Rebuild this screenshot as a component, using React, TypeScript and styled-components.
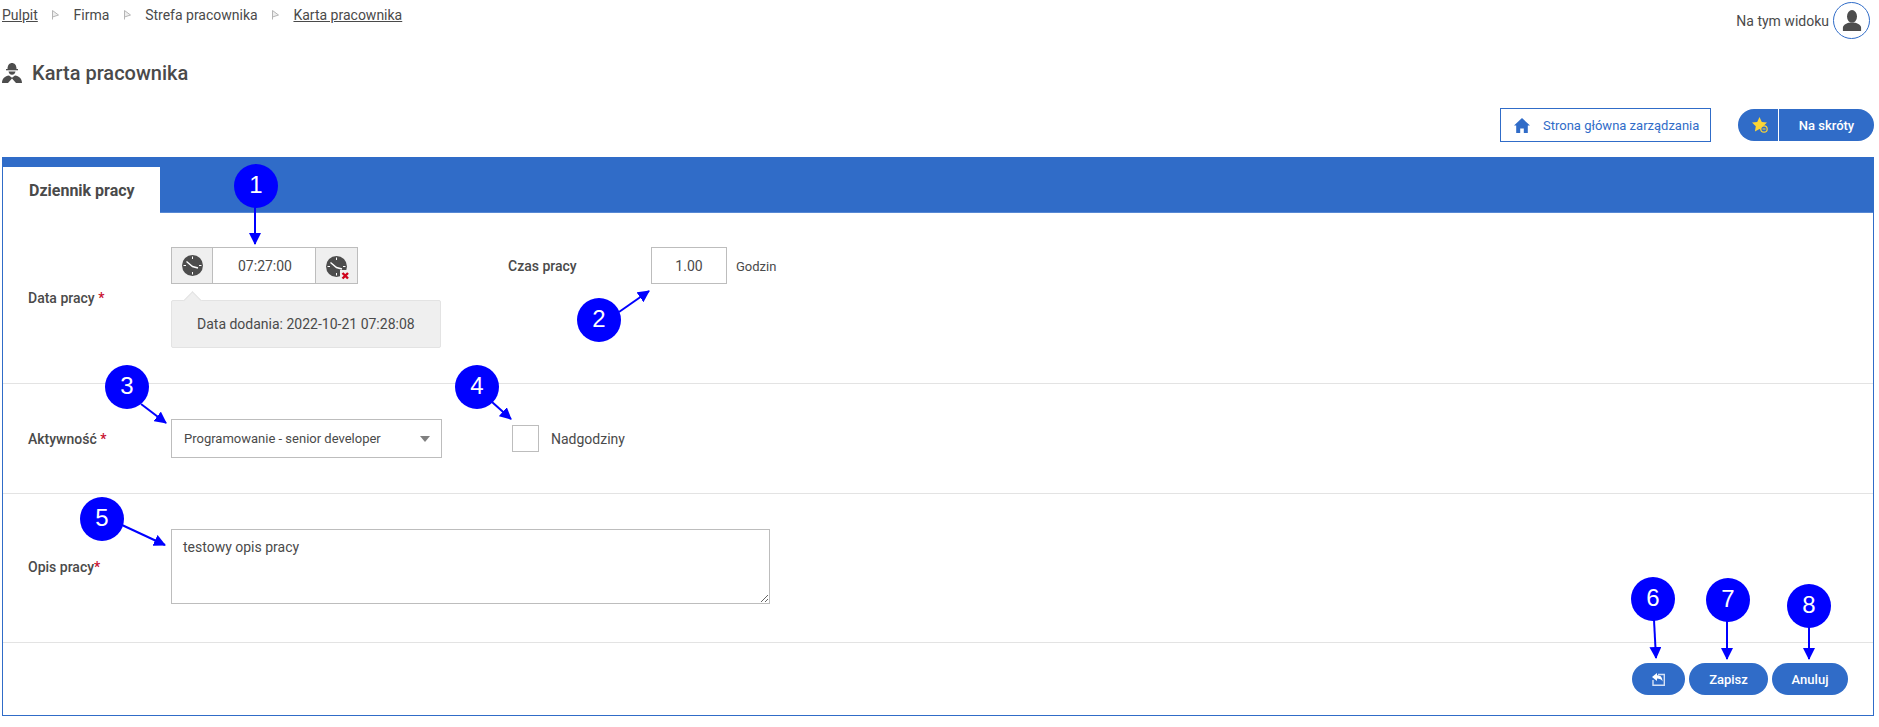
import React from "react";
import styled, { createGlobalStyle } from "styled-components";

const BLUE = "#306cc8";
const TEXT = "#4a4a4a";
const LINE = "#bdbdbd";

const GlobalStyle = createGlobalStyle`
  html, body {
    margin: 0;
    padding: 0;
    background: #fff;
  }
  body {
    font-family: Roboto, "Liberation Sans", sans-serif;
    font-size: 14px;
    color: ${TEXT};
  }
  * {
    box-sizing: border-box;
  }
`;

// Ikony
const ClockIcon: React.FC = () => (
  <svg width="21" height="21" viewBox="0 0 21 21">
    <circle cx="10.5" cy="10.5" r="10.5" fill="#4d4d4d" />
    <path d="M10.5 1.5v2.5M10.5 17v2.5M1.5 10.5H4M17 10.5h2.5" stroke="#fff" strokeWidth="1" />
    <path d="M4.5 6.5l6 5 5.5 1.5" stroke="#fff" strokeWidth="1.4" fill="none" />
  </svg>
);

const ClockRemoveIcon: React.FC = () => (
  <svg width="25" height="25" viewBox="0 0 25 25">
    <circle cx="10.5" cy="10.5" r="10.5" fill="#4d4d4d" />
    <path d="M10.5 1.5v2.5M10.5 17v2.5M1.5 10.5H4M17 10.5h2.5" stroke="#fff" strokeWidth="1" />
    <path d="M4.5 6.5l6 5 5.5 1.5" stroke="#fff" strokeWidth="1.4" fill="none" />
    <rect x="14" y="14" width="11" height="11" fill="#efefef" />
    <path d="M16.5 17l5.5 5.5M22 17l-5.5 5.5" stroke="#d0021b" strokeWidth="2.4" />
  </svg>
);

const SeparatorIcon: React.FC = () => (
  <svg width="7" height="10" viewBox="0 0 7 10">
    <path d="M.5.5v9M.5.5L6.5 5 .5 7" stroke="#b5b5b5" strokeWidth="1" fill="#eee" />
  </svg>
);

const WorkerIcon: React.FC = () => (
  <svg width="20" height="20" viewBox="0 0 20 20">
    <path d="M5.500 6C5.500 2 7.500 0 10 0s4.500 2 4.500 6z" fill="#4d4d4d" />
    <path d="M4 6h12v1.300H4z" fill="#4d4d4d" />
    <path d="M6.500 8.500h7c-.4 2-1.700 3.300-3.500 3.300S6.900 10.500 6.500 8.500z" fill="#4d4d4d" />
    <path d="M0 20c0-4.500 3-7 7-7.500l3 2.300 3-2.300c4 .5 7 3 7 7.500h-6l-4-4.500L6 20z" fill="#4d4d4d" />
  </svg>
);

const UserIcon: React.FC = () => (
  <svg width="20" height="21" viewBox="0 0 22 23">
    <ellipse cx="11" cy="7" rx="5.500" ry="7" fill="#4d4d4d" />
    <path d="M1 23v-3.500c0-3 3.500-4.500 6.500-5.500h7c3 1 6.500 2.500 6.500 5.500V23z" fill="#4d4d4d" />
  </svg>
);

const HomeIcon: React.FC = () => (
  <svg width="16" height="15" viewBox="0 0 16 15">
    <path d="M8 0L0 7.500h2.200V15h4v-4.500h3.600V15h4V7.500H16z" fill={BLUE} />
  </svg>
);

const StarIcon: React.FC = () => (
  <svg width="16" height="16" viewBox="0 0 16 16">
    <path d="M7.500 0l2.300 4.900 5.200.7-3.800 3.600.9 5.300-4.600-2.600-4.600 2.600.9-5.300L0 5.600l5.200-.7z" fill="#fcd535" />
    <circle cx="12" cy="12" r="3.200" fill={BLUE} stroke="#fcd535" strokeWidth="1.200" />
    <path d="M10.500 12h3" stroke="#fcd535" strokeWidth="1" />
  </svg>
);

const BackIcon: React.FC = () => (
  <svg width="13" height="13" viewBox="0 0 13 13">
    <path d="M6 1.500H12.300V12.300H1V7" stroke="#d5e1f5" strokeWidth="1.400" fill="none" />
    <path d="M0 4L5 0v2.300c3.500 0 5.500 2 5.500 6.200-1-2.200-2.700-3-5.500-3V8z" fill="#fff" />
  </svg>
);

// Adnotacje nałożone na zrzut
const markers = [
  { n: 1, x: 256, y: 186 },
  { n: 2, x: 599, y: 320 },
  { n: 3, x: 127, y: 387 },
  { n: 4, x: 477, y: 387 },
  { n: 5, x: 102, y: 519 },
  { n: 6, x: 1653, y: 599 },
  { n: 7, x: 1728, y: 600 },
  { n: 8, x: 1809, y: 606 },
];

const arrows = [
  [255, 206, 255, 244],
  [619, 312, 649, 291],
  [141, 404, 166, 423],
  [492, 402, 511, 419],
  [122, 525, 165, 545],
  [1654, 620, 1656, 658],
  [1727, 620, 1727, 659],
  [1809, 626, 1809, 659],
];

const Annotations: React.FC = () => (
  <>
    <ArrowLayer width="1879" height="727">
      <defs>
        <marker id="head" markerWidth="12" markerHeight="12" refX="11" refY="6" orient="auto" markerUnits="userSpaceOnUse">
          <path d="M0 0L12 6 0 12z" fill="#0000ff" />
        </marker>
      </defs>
      {arrows.map(([x1, y1, x2, y2]) => (
        <line key={`${x1}-${y1}`} x1={x1} y1={y1} x2={x2} y2={y2} stroke="#0000ff" strokeWidth="2" markerEnd="url(#head)" />
      ))}
    </ArrowLayer>
    {markers.map((m) => (
      <Marker key={m.n} $x={m.x} $y={m.y}>
        {m.n}
      </Marker>
    ))}
  </>
);

export default function App() {
  return (
    <Page>
      <GlobalStyle />
      <TopBar>
        <Breadcrumbs>
          <CrumbLink>Pulpit</CrumbLink>
          <SeparatorIcon />
          <span>Firma</span>
          <SeparatorIcon />
          <span>Strefa pracownika</span>
          <SeparatorIcon />
          <CrumbLink>Karta pracownika</CrumbLink>
        </Breadcrumbs>
        <ViewUser>
          Na tym widoku
          <Avatar>
            <UserIcon />
          </Avatar>
        </ViewUser>
      </TopBar>

      <Title>
        <WorkerIcon />
        <h1>Karta pracownika</h1>
      </Title>

      <Actions>
        <HomeLink>
          <HomeIcon />
          Strona główna zarządzania
        </HomeLink>
        <Shortcut>
          <ShortcutIcon>
            <StarIcon />
          </ShortcutIcon>
          <ShortcutText>Na skróty</ShortcutText>
        </Shortcut>
      </Actions>

      <Panel>
        <TabBar>
          <Tab>Dziennik pracy</Tab>
        </TabBar>

        <Row $top={34} $bottom={35}>
          <Label>
            Data pracy <Req>*</Req>
          </Label>
          <FieldColumn>
            <TimeGroup>
              <TimeButton>
                <ClockIcon />
              </TimeButton>
              <TimeValue>07:27:00</TimeValue>
              <TimeButton $remove>
                <ClockRemoveIcon />
              </TimeButton>
            </TimeGroup>
            <Hint>Data dodania: 2022-10-21 07:28:08</Hint>
          </FieldColumn>
          <TopField>
            <Label>Czas pracy</Label>
            <HoursInput defaultValue="1.00" />
            <Unit>Godzin</Unit>
          </TopField>
        </Row>

        <Row $top={35} $bottom={35}>
          <Label>
            Aktywność <Req>*</Req>
          </Label>
          <SelectBox>
            Programowanie - senior developer
            <Caret />
          </SelectBox>
          <CheckField>
            <Check type="checkbox" />
            <span>Nadgodziny</span>
          </CheckField>
        </Row>

        <Row $top={35} $bottom={38}>
          <Label>
            Opis pracy<Req>*</Req>
          </Label>
          <Description defaultValue="testowy opis pracy" />
        </Row>

        <Footer>
          <PillButton $width={53}>
            <BackIcon />
          </PillButton>
          <PillButton $width={79}>Zapisz</PillButton>
          <PillButton $width={76}>Anuluj</PillButton>
        </Footer>
      </Panel>

      <Annotations />
    </Page>
  );
}

const Page = styled.div`
  position: relative;
  width: 1879px;
  height: 727px;
  padding: 2px 5px 0 2px;
  overflow: hidden;
`;

const TopBar = styled.div`
  display: flex;
  justify-content: space-between;
  height: 37px;
`;

const Breadcrumbs = styled.nav`
  display: flex;
  align-items: center;
  gap: 14.4px;
  height: 26px;
`;

const CrumbLink = styled.a`
  text-decoration: underline;
`;

const ViewUser = styled.div`
  display: flex;
  align-items: center;
  gap: 4px;
  margin-right: 4px;
`;

const Avatar = styled.div`
  width: 37px;
  height: 37px;
  border: 1px solid ${BLUE};
  border-radius: 50%;
  display: flex;
  align-items: center;
  justify-content: center;
`;

const Title = styled.div`
  display: flex;
  align-items: center;
  gap: 10px;
  height: 26px;
  margin-top: 21px;

  h1 {
    margin: 0;
    font-size: 20px;
    font-weight: 500;
  }
`;

const Actions = styled.div`
  display: flex;
  justify-content: flex-end;
  align-items: center;
  gap: 27px;
  height: 34px;
  margin-top: 22px;
`;

const HomeLink = styled.a`
  display: flex;
  align-items: center;
  gap: 13px;
  width: 211px;
  height: 34px;
  padding-left: 13px;
  border: 1px solid ${BLUE};
  color: ${BLUE};
  font-size: 13px;
`;

const Shortcut = styled.button`
  display: flex;
  align-items: center;
  width: 136px;
  height: 32px;
  padding: 0;
  border: 0;
  border-radius: 16px;
  background: ${BLUE};
  color: #fff;
  font: 500 13px Roboto, sans-serif;
`;

const ShortcutIcon = styled.span`
  display: flex;
  align-items: center;
  justify-content: center;
  width: 41px;
  height: 100%;
  padding-left: 3px;
  border-right: 1px solid #fff;
`;

const ShortcutText = styled.span`
  flex: 1;
  text-align: center;
`;

const Panel = styled.div`
  margin-top: 15px;
  height: 559px;
  border: 1px solid ${BLUE};
  border-top: 0;
`;

const TabBar = styled.div`
  height: 56px;
  padding-top: 10px;
  background: ${BLUE};
  border-bottom: 1px solid #5688d4;
`;

const Tab = styled.div`
  display: flex;
  align-items: center;
  width: 157px;
  height: 46px;
  padding-left: 26px;
  background: #fff;
  font-size: 16px;
  font-weight: 700;
`;

const Row = styled.div<{ $top: number; $bottom: number }>`
  display: flex;
  align-items: center;
  padding: ${(p) => p.$top}px 0 ${(p) => p.$bottom}px 25px;
  border-bottom: 1px solid #e3e3e3;
`;

const Label = styled.label`
  flex: none;
  width: 143px;
  font-weight: 500;
`;

const Req = styled.span`
  color: #c8102e;
`;

const FieldColumn = styled.div`
  display: flex;
  flex-direction: column;
  gap: 16px;
  width: 271px;
`;

const TimeGroup = styled.div`
  display: flex;
  width: 187px;
  height: 37px;
  border: 1px solid ${LINE};
`;

const TimeButton = styled.div<{ $remove?: boolean }>`
  display: flex;
  align-items: center;
  justify-content: center;
  flex: none;
  width: ${(p) => (p.$remove ? 41 : 40)}px;
  background: #efefef;
  padding: ${(p) => (p.$remove ? "5px 0 0 4px" : "0")};
`;

const TimeValue = styled.div`
  flex: 1;
  display: flex;
  align-items: center;
  justify-content: center;
  padding-left: 2px;
  border-left: 1px solid ${LINE};
  border-right: 1px solid ${LINE};
`;

const Hint = styled.div`
  position: relative;
  display: flex;
  align-items: center;
  width: 270px;
  height: 48px;
  padding-left: 25px;
  background: #efefef;
  border: 1px solid #e3e3e3;
  border-radius: 2px;

  &::before {
    content: "";
    position: absolute;
    left: 14px;
    top: -7px;
    width: 12px;
    height: 12px;
    background: #efefef;
    border-left: 1px solid #e3e3e3;
    border-top: 1px solid #e3e3e3;
    transform: rotate(45deg);
  }
`;

const TopField = styled.div`
  align-self: flex-start;
  display: flex;
  align-items: center;
  margin-left: 66px;
`;

const HoursInput = styled.input`
  width: 76px;
  height: 37px;
  border: 1px solid ${LINE};
  outline: 0;
  text-align: center;
  font: 14px Roboto, sans-serif;
  color: ${TEXT};
`;

const Unit = styled.span`
  margin-left: 9px;
  font-size: 13px;
  padding-top: 2px;
`;

const SelectBox = styled.div`
  display: flex;
  align-items: center;
  justify-content: space-between;
  width: 271px;
  height: 39px;
  padding: 0 11px 0 12px;
  border: 1px solid ${LINE};
  font-size: 13px;
`;

const Caret = styled.span`
  width: 0;
  height: 0;
  border-left: 5.5px solid transparent;
  border-right: 5.5px solid transparent;
  border-top: 6px solid #808080;
`;

const CheckField = styled.label`
  display: flex;
  align-items: center;
  gap: 12px;
  margin-left: 70px;
`;

const Check = styled.input`
  appearance: none;
  width: 27px;
  height: 27px;
  margin: 0;
  border: 1px solid ${LINE};
  background: #fff;
`;

const Description = styled.textarea`
  width: 599px;
  height: 75px;
  padding: 9px 11px;
  border: 1px solid ${LINE};
  outline: 0;
  font: 14px Roboto, sans-serif;
  color: ${TEXT};
`;

const Footer = styled.div`
  display: flex;
  justify-content: flex-end;
  gap: 4px;
  padding: 20px 25px 0 0;
`;

const PillButton = styled.button<{ $width: number }>`
  display: flex;
  align-items: center;
  justify-content: center;
  width: ${(p) => p.$width}px;
  height: 32px;
  padding: 0;
  border: 0;
  border-radius: 16px;
  background: ${BLUE};
  color: #fff;
  font: 500 13px Roboto, sans-serif;
`;

const ArrowLayer = styled.svg`
  position: absolute;
  left: 0;
  top: 0;
  pointer-events: none;
`;

const Marker = styled.div<{ $x: number; $y: number }>`
  position: absolute;
  left: ${(p) => p.$x - 22}px;
  top: ${(p) => p.$y - 22}px;
  width: 44px;
  height: 44px;
  padding-bottom: 3px;
  border-radius: 50%;
  background: #0000ff;
  color: #fff;
  display: flex;
  align-items: center;
  justify-content: center;
  font: 24px "Liberation Sans", sans-serif;
`;
